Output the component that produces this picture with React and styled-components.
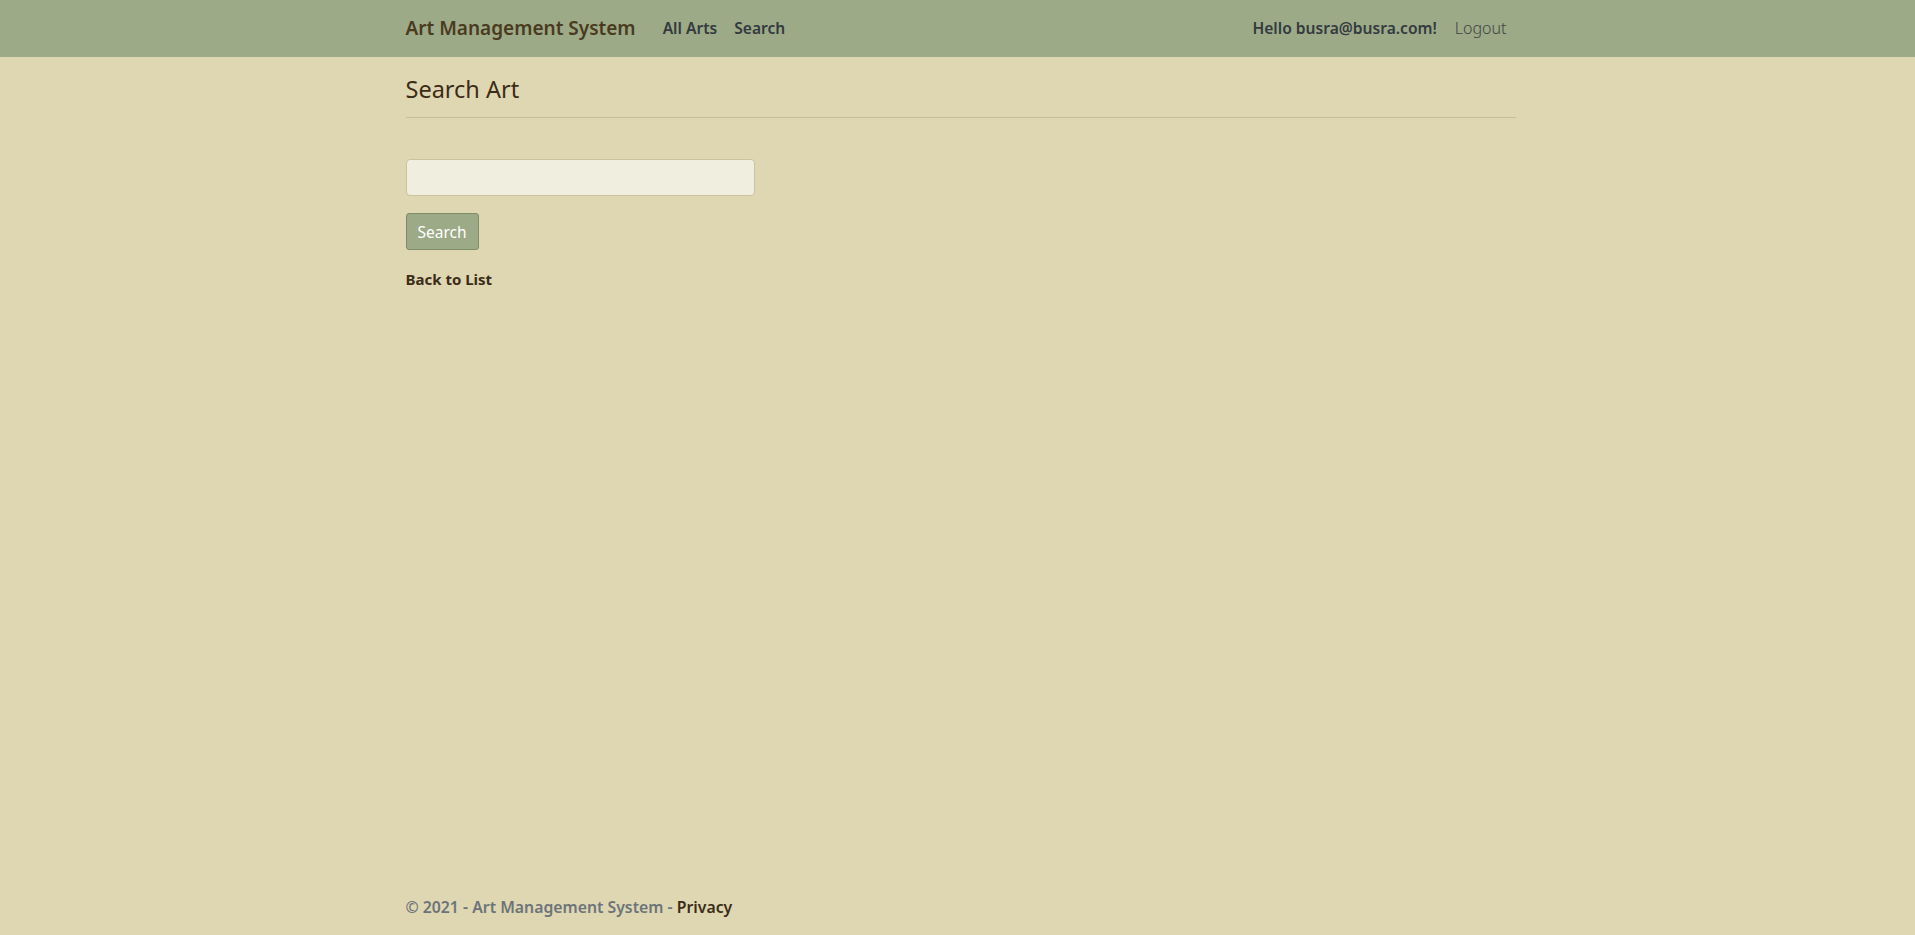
import React from "react";
import styled, { createGlobalStyle } from "styled-components";

const GlobalStyle = createGlobalStyle`
  html, body {
    margin: 0;
    padding: 0;
    height: 100%;
  }
  body {
    background-color: #dfd7b1;
    font-family: "Noto Sans", "Open Sans", sans-serif;
    font-size: 16px;
    color: #3b2c17;
  }
  #root {
    min-height: 100%;
  }
`;

const Page = styled.div`
  min-height: 935px;
  display: flex;
  flex-direction: column;
`;

const NavBar = styled.header`
  background-color: #9caa87;
  height: 57px;
  display: flex;
  align-items: center;
`;

const Container = styled.div`
  width: 1110px;
  margin-left: calc(50% - 552px);
  display: flex;
  align-items: center;
`;

const Brand = styled.a`
  font-size: 19px;
  font-weight: 600;
  color: #4a3a20;
  text-decoration: none;
  margin-right: 27px;
  margin-top: -2px;
`;

const NavLink = styled.a`
  font-size: ${(p) => (p.$light ? 16 : 15.6)}px;
  font-weight: ${(p) => (p.$light ? 300 : 600)};
  color: ${(p) => (p.$light ? "#3e4446" : "#343a40")};
  text-decoration: none;
  margin-right: ${(p) => p.$gap || 0}px;
  margin-top: -2px;
`;

const Spacer = styled.div`
  flex: 1;
`;

const Main = styled.main`
  flex: 1;
`;

const Body = styled.div`
  width: 1110px;
  margin-left: calc(50% - 552px);
`;

const Title = styled.h1`
  font-size: 23.5px;
  font-weight: 400;
  color: #3b2c17;
  margin: 0;
  line-height: 30px;
  box-sizing: border-box;
  height: 60px;
  padding-top: 17px;
`;

const Rule = styled.hr`
  border: 0;
  border-top: 1px solid #c6bf9c;
  margin: 0 0 41px 0;
`;

const Input = styled.input`
  display: block;
  width: 349px;
  height: 37px;
  box-sizing: border-box;
  background-color: #f0eedf;
  border: 1px solid #c9c3a0;
  border-radius: 4px;
  font-family: inherit;
  font-size: 15px;
  padding: 6px 12px;
  margin: 0 0 17px 0;
`;

const Button = styled.button`
  display: block;
  height: 37px;
  width: 73px;
  background-color: #9caa87;
  border: 1px solid #7e8c68;
  border-radius: 3px;
  color: #ffffff;
  font-family: inherit;
  font-size: 15.5px;
  padding: 0;
  margin: 0 0 18px 0;
`;

const BackLink = styled.a`
  font-size: 15px;
  font-weight: 700;
  color: #3b2c17;
  text-decoration: none;
`;

const Footer = styled.footer`
  height: 56px;
  display: flex;
  align-items: center;
`;

const FooterText = styled.div`
  width: 1110px;
  margin-left: calc(50% - 552px);
  font-size: 15.8px;
  font-weight: 600;
  color: #6c747a;
`;

const Privacy = styled.a`
  color: #3b2c17;
  text-decoration: none;
`;

const App = () => {
  return (
    <>
      <GlobalStyle />
      <Page>
        <NavBar>
          <Container>
            <Brand href="#">Art Management System</Brand>
            <NavLink href="#" $gap={17}>All Arts</NavLink>
            <NavLink href="#">Search</NavLink>
            <Spacer />
            <NavLink href="#" $gap={18}>Hello busra@busra.com!</NavLink>
            <NavLink href="#" $light $gap={9}>Logout</NavLink>
          </Container>
        </NavBar>
        <Main>
          <Body>
            <Title>Search Art</Title>
            <Rule />
            <Input type="text" />
            <Button>Search</Button>
            <BackLink href="#">Back to List</BackLink>
          </Body>
        </Main>
        <Footer>
          <FooterText>
            © 2021 - Art Management System - <Privacy href="#">Privacy</Privacy>
          </FooterText>
        </Footer>
      </Page>
    </>
  );
};

export default App;
